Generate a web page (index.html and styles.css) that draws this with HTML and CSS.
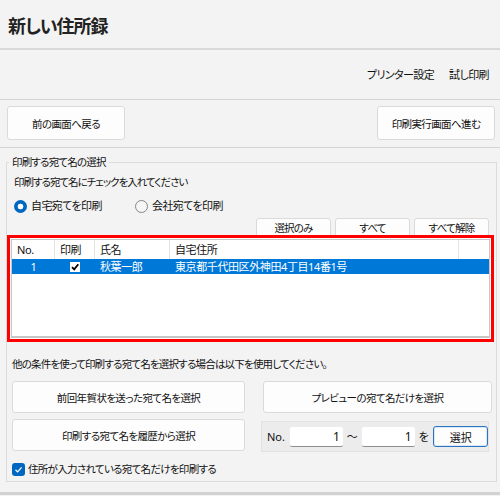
FILE: index.html
```html
<!DOCTYPE html>
<html lang="ja">
<head>
    <meta charset="UTF-8">
    <meta name="viewport" content="width=device-width, initial-scale=1.0">
    <title>新しい住所録</title>
    <link rel="stylesheet" href="styles.css">
</head>
<body>
    <header class="title-bar">
        <h1>新しい住所録</h1>
    </header>

    <div class="toolbar">
        <span class="tool-link">プリンター設定</span>
        <span class="tool-link">試し印刷</span>
    </div>

    <div class="nav">
        <button class="btn nav-btn">前の画面へ戻る</button>
        <button class="btn nav-btn">印刷実行画面へ進む</button>
    </div>

    <fieldset class="group">
        <legend>印刷する宛て名の選択</legend>
        <p class="hint">印刷する宛て名にチェックを入れてください</p>

        <div class="radios">
            <label class="radio-label"><span class="radio checked"></span>自宅宛てを印刷</label>
            <label class="radio-label"><span class="radio"></span>会社宛てを印刷</label>
        </div>

        <div class="list-actions">
            <button class="btn small-btn">選択のみ</button>
            <button class="btn small-btn">すべて</button>
            <button class="btn small-btn">すべて解除</button>
        </div>

        <div class="highlight">
            <div class="list">
                <div class="list-head">
                    <div class="col">No.</div>
                    <div class="col">印刷</div>
                    <div class="col">氏名</div>
                    <div class="col">自宅住所</div>
                </div>
                <div class="list-row selected">
                    <div class="cell center">1</div>
                    <div class="cell center">
                        <span class="mini-check">
                            <svg width="10" height="10" viewBox="0 0 10 10"><path d="M2 5.2 L4.2 7.4 L8.3 2.3" fill="none" stroke="#000" stroke-width="1.8"/></svg>
                        </span>
                    </div>
                    <div class="cell">秋葉一郎</div>
                    <div class="cell">東京都千代田区外神田4丁目14番1号</div>
                </div>
            </div>
        </div>

        <p class="note">他の条件を使って印刷する宛て名を選択する場合は以下を使用してください。</p>

        <div class="options">
            <button class="btn option-btn">前回年賀状を送った宛て名を選択</button>
            <button class="btn option-btn">プレビューの宛て名だけを選択</button>
            <button class="btn option-btn">印刷する宛て名を履歴から選択</button>
            <div class="range-panel">
                <span class="range-label">No.</span>
                <input class="range-input" type="text" value="1">
                <span class="range-sep">～</span>
                <input class="range-input" type="text" value="1">
                <span class="range-wo">を</span>
                <button class="btn range-btn">選択</button>
            </div>
        </div>

        <label class="check-row">
            <span class="checkbox">
                <svg width="13" height="13" viewBox="0 0 13 13"><path d="M3.5 6.8 L5.6 8.9 L9.6 4.4" fill="none" stroke="#fff" stroke-width="1.3"/></svg>
            </span>
            住所が入力されている宛て名だけを印刷する
        </label>
    </fieldset>

    <div class="footer"></div>
</body>
</html>
```

FILE: styles.css
```css
* {
    box-sizing: border-box;
}

body {
    margin: 0;
    width: 500px;
    height: 496px;
    overflow: hidden;
    background: #f3f3f3;
    color: #111;
    font-family: "Noto Sans", "Noto Sans CJK JP", sans-serif;
    font-size: 10.5px;
    letter-spacing: -0.8px;
    line-height: 16px;
    font-feature-settings: "palt";
}

p {
    margin: 0;
}

/* Title */
.title-bar {
    height: 50px;
    padding: 13px 0 0 8px;
    border-bottom: 2px solid #d9d9d9;
}

.title-bar h1 {
    margin: 0;
    font-size: 18px;
    letter-spacing: -1px;
    line-height: 26px;
    font-weight: bold;
    color: #222;
}

.toolbar {
    height: 50px;
    display: flex;
    justify-content: flex-end;
    align-items: center;
    gap: 15px;
    padding-right: 11px;
    font-size: 11px;
    letter-spacing: -0.6px;
    border-bottom: 1px solid #d4d4d4;
}

.nav {
    height: 48px;
    display: flex;
    justify-content: space-between;
    padding: 6px 5px 0 7px;
    border-bottom: 1px solid #d4d4d4;
}

.btn {
    font-family: inherit;
    font-size: 10.5px;
    letter-spacing: -0.6px;
    font-feature-settings: "palt";
    color: #111;
    background: #fdfdfd;
    border: 1px solid #dadada;
    border-radius: 3px;
    padding: 0;
}

.nav-btn {
    width: 118px;
    height: 34px;
}

/* Group box */
.group {
    margin: 6px 3px 0 6px;
    padding: 0 0 4px 0;
    border: 1px solid #dcdcdc;
    min-width: 0;
}

.group legend {
    margin-left: 2px;
    padding: 0 3px;
    line-height: 16px;
}

.hint {
    margin-top: 4px;
    padding-left: 7px;
    letter-spacing: -1px;
}

.radios {
    margin-top: 6px;
    height: 20px;
    display: flex;
    align-items: center;
    padding-left: 7px;
}

.radio-label {
    width: 121px;
    display: flex;
    align-items: center;
    gap: 4px;
    font-size: 11px;
    letter-spacing: -0.6px;
}

.radio {
    width: 13px;
    height: 13px;
    border-radius: 50%;
    border: 1px solid #858585;
    background: #f6f6f6;
}

.radio.checked {
    border: none;
    background: radial-gradient(circle, #fff 0 2.6px, #0067c0 3.2px);
}

.list-actions {
    margin-top: 2px;
    display: flex;
    justify-content: flex-end;
    gap: 4px;
    padding-right: 7px;
}

.small-btn {
    width: 75px;
    height: 20px;
    line-height: 18px;
    letter-spacing: -0.8px;
}

/* Red highlighted list */
.highlight {
    position: relative;
    z-index: 1;
    margin: -3px 2px 0 0;
    height: 107px;
    border: 3px solid #ff0000;
    padding: 1px;
    background: #fff;
}

.list {
    height: 100%;
    border: 1px solid #c6c6c6;
    border-bottom-width: 2px;
    background: #fff;
    font-size: 11px;
    letter-spacing: -0.4px;
}

.list-head,
.list-row {
    display: grid;
    grid-template-columns: 43px 40px 75px 289px;
}

.list-head {
    height: 19px;
}

.list-head .col {
    padding: 2px 0 0 5px;
    border-right: 1px solid #e3e3e3;
}

.list-row {
    height: 15px;
    line-height: 15px;
}

.list-row.selected {
    background: #0078d7;
    color: #fff;
}

.cell {
    padding-left: 5px;
}

.cell.center {
    padding-left: 0;
    text-align: center;
    display: flex;
    justify-content: center;
    align-items: center;
}

.mini-check {
    width: 10px;
    height: 10px;
    background: #fff;
    display: flex;
}

.note {
    margin-top: 14px;
    padding-left: 5px;
}

/* Other selection options */
.options {
    margin-top: 9px;
    padding-left: 5px;
    display: grid;
    grid-template-columns: 233px 229px;
    grid-auto-rows: 32px;
    column-gap: 18px;
    row-gap: 6px;
}

.option-btn {
    height: 32px;
}

.range-panel {
    margin: 2px 0 0 -2px;
    width: 228px;
    height: 31px;
    display: flex;
    align-items: center;
    padding-left: 5px;
    background: #ececec;
    border: 1px solid #e2e2e2;
    font-size: 11px;
    letter-spacing: 0;
}

.range-label {
    width: 23px;
}

.range-input {
    width: 53px;
    height: 20px;
    border: none;
    border-bottom: 1px solid #8d8d8d;
    border-radius: 2px;
    background: #fff;
    text-align: right;
    padding: 0 3px 0 0;
    font-family: inherit;
    font-size: 12px;
    color: #111;
}

.range-sep {
    width: 19px;
    text-align: center;
}

.range-wo {
    width: 19px;
    padding-left: 4px;
}

.range-btn {
    width: 55px;
    height: 21px;
    font-size: 11px;
    letter-spacing: 0;
    border: 1px solid #2a74c2;
    box-shadow: inset 0 0 0 1px #d9e7f6;
    border-radius: 3px;
}

.check-row {
    margin-top: 10px;
    padding-left: 5px;
    height: 16px;
    display: flex;
    align-items: center;
    gap: 3px;
    font-size: 10.5px;
    letter-spacing: -0.7px;
}

.checkbox {
    width: 13px;
    height: 13px;
    border-radius: 3px;
    background: #0067c0;
    display: flex;
}

.footer {
    margin-top: 10px;
    height: 10px;
    border-top: 3px solid #d2d2d2;
}
```
